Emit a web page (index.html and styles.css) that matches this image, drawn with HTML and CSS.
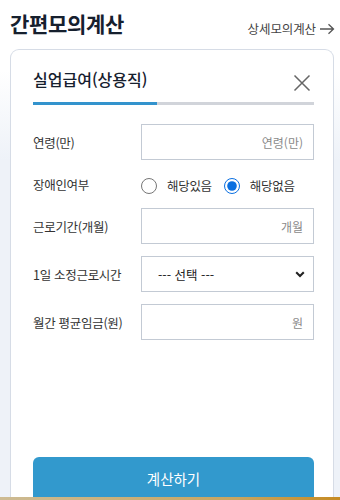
FILE: index.html
```html
<!DOCTYPE html>
<html lang="ko">
<head>
<meta charset="utf-8">
<title>간편모의계산</title>
<link rel="stylesheet" href="styles.css">
</head>
<body>
<header class="top">
  <h1 class="page-title">간편모의계산</h1>
  <a class="detail-link" href="#">상세모의계산
    <svg class="arrow" width="16" height="12" viewBox="0 0 16 12"><path d="M1 6H14.5M9.5 1.2L14.5 6L9.5 10.8" fill="none" stroke="#555" stroke-width="1.3"/></svg>
  </a>
</header>
<section class="card">
  <div class="card-head">
    <h2 class="card-title">실업급여(상용직)</h2>
    <svg class="close" width="18" height="18" viewBox="0 0 18 18"><path d="M1.5 1.5L16.5 16.5M16.5 1.5L1.5 16.5" stroke="#666" stroke-width="1.5" fill="none"/></svg>
  </div>
  <div class="progress"><div class="progress-fill" style="width:44%"></div></div>
  <form class="form">
    <label class="lbl">연령(만)</label>
    <input class="field" type="text" placeholder="연령(만)">
    <span class="lbl">장애인여부</span>
    <div class="radios">
      <label class="radio"><input type="radio" name="dis"> <span>해당있음</span></label>
      <label class="radio"><input type="radio" name="dis" checked> <span>해당없음</span></label>
    </div>
    <label class="lbl">근로기간(개월)</label>
    <input class="field" type="text" placeholder="개월">
    <label class="lbl">1일 소정근로시간</label>
    <div class="select-wrap">
      <select class="select"><option>--- 선택 ---</option></select>
      <svg class="chev" width="10" height="7" viewBox="0 0 10 7"><path d="M1.2 1.2L5 5L8.8 1.2" fill="none" stroke="#222" stroke-width="2"/></svg>
    </div>
    <label class="lbl">월간 평균임금(원)</label>
    <input class="field" type="text" placeholder="원">
  </form>
  <button class="calc" type="button">계산하기</button>
</section>
<div class="strip"></div>
</body>
</html>
```

FILE: styles.css
```css
* { box-sizing: border-box; }
html, body { margin: 0; padding: 0; }
body {
  width: 340px;
  height: 500px;
  overflow: hidden;
  font-family: "Noto Sans CJK KR", "Noto Sans", sans-serif;
  color: #222;
  background: linear-gradient(180deg, #ffffff 0, #ffffff 70px, #eef2f8 160px, #eef2f8 100%);
}
.top {
  height: 49px;
  display: flex;
  justify-content: space-between;
  align-items: flex-start;
  padding: 7px 5px 0 10px;
}
.page-title {
  margin: 0;
  font-size: 21px;
  line-height: 32px;
  font-weight: 700;
  color: #16202e;
  letter-spacing: -0.3px;
}
.detail-link {
  display: flex;
  align-items: center;
  gap: 3px;
  margin-top: 13px;
  font-size: 12.5px;
  line-height: 18px;
  color: #444;
  text-decoration: none;
  letter-spacing: -0.1px;
}
.card {
  margin-left: 10px;
  width: 324px;
  height: 451px;
  overflow: hidden;
  background: #fff;
  border: 1px solid #d6dce6;
  border-bottom: 0;
  border-radius: 9px 9px 0 0;
  padding: 16px 19px 0 22px;
}
.card-head {
  display: flex;
  justify-content: space-between;
  align-items: center;
}
.card-title {
  margin: 0;
  font-size: 16px;
  line-height: 26px;
  font-weight: 500;
  color: #16202e;
}
.close { margin: 8px 3px 0 0; }
.progress {
  margin-top: 10px;
  height: 3px;
  background: #d1d4da;
}
.progress-fill { height: 3px; background: #3393cd; }
.form {
  margin-top: 19px;
  display: grid;
  grid-template-columns: 108px 1fr;
  row-gap: 12px;
  align-items: center;
}
.lbl {
  font-size: 12.5px;
  color: #333;
  letter-spacing: -0.3px;
}
.field {
  height: 36px;
  border: 1px solid #c3cad4;
  border-radius: 0;
  padding: 0 10px;
  text-align: right;
  font-family: inherit;
  font-size: 12px;
  width: 100%;
  outline: none;
}
.field::placeholder { color: #8a8a8a; }
.radios {
  height: 24px;
  display: flex;
  align-items: center;
  gap: 12px;
  padding-top: 3px;
}
.radio {
  display: flex;
  align-items: center;
  gap: 10px;
  font-size: 12.5px;
  color: #333;
  letter-spacing: -0.3px;
}
.radio input {
  width: 16px;
  height: 16px;
  margin: 0;
  accent-color: #0a6fe0;
}
.select-wrap { position: relative; }
.select {
  width: 100%;
  height: 36px;
  border: 1px solid #c3cad4;
  border-radius: 0;
  background: #fff;
  padding: 0 30px 0 16px;
  font-family: inherit;
  font-size: 12.5px;
  color: #222;
  -webkit-appearance: none;
  appearance: none;
  outline: none;
}
.chev { position: absolute; right: 9px; top: 15px; pointer-events: none; }
.calc {
  display: block;
  margin-top: 117px;
  width: 100%;
  height: 46px;
  border: 0;
  border-radius: 6px;
  background: #3299cd;
  color: #fff;
  font-family: inherit;
  font-size: 14.5px;
  padding-bottom: 5px;
}
.strip {
  position: fixed;
  left: 0;
  right: 0;
  bottom: 0;
  height: 3px;
  background: linear-gradient(90deg, #cdbb93, #c8a560 70%, #c68b22);
}
```
